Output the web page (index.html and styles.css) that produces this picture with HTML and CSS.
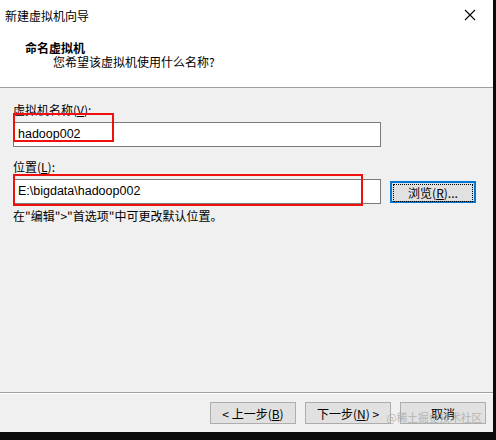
FILE: index.html
```html
<!DOCTYPE html>
<html>
<head>
  <link rel="stylesheet" href="styles.css">
</head>
<body>
  <div class="window">
    <div class="header">
      <div class="titlebar">
        <span class="title">新建虚拟机向导</span>
        <svg class="close" width="12" height="12" viewBox="0 0 12 12">
          <path d="M1 1 L11 11 M11 1 L1 11" stroke="#000" stroke-width="1.1" fill="none"/>
        </svg>
      </div>
      <div class="heading">
        <p class="heading-title">命名虚拟机</p>
        <p class="heading-sub">您希望该虚拟机使用什么名称?</p>
      </div>
    </div>

    <div class="content">
      <label class="label name-label">虚拟机名称(<u>V</u>):</label>
      <div class="field name-row">
        <div class="input">hadoop002</div>
        <div class="mark name-mark"></div>
      </div>

      <label class="label loc-label">位置(<u>L</u>):</label>
      <div class="field loc-row">
        <div class="input">E:\bigdata\hadoop002</div>
        <button class="browse"><span>浏览(<u>R</u>)...</span></button>
        <div class="mark loc-mark"></div>
      </div>
      <p class="hint">在"编辑"&gt;"首选项"中可更改默认位置。</p>
    </div>

    <div class="footer">
      <button class="btn">&lt; 上一步(<u>B</u>)</button>
      <button class="btn">下一步(<u>N</u>) &gt;</button>
      <button class="btn">取消</button>
      <span class="watermark">@稀土掘金技术社区</span>
    </div>
  </div>
</body>
</html>
```

FILE: styles.css
```css
body {
  margin: 0;
  background-color: #0a0a0a;
  font-family: "Noto Sans CJK SC", "Liberation Sans", sans-serif;
  font-size: 12px;
  color: #000;
}

.window {
  width: 493px;
  height: 432px;
  background-color: #f0f0f0;
  display: flex;
  flex-direction: column;
}

.header {
  height: 87px;
  background-color: #fff;
  border-bottom: 1px solid #a0a0a0;
}

.titlebar {
  height: 30px;
  display: flex;
  align-items: center;
  justify-content: space-between;
  padding: 0 17px 0 5px;
}

.heading p {
  margin: 0;
  line-height: 16px;
}

.heading-title {
  font-weight: bold;
  padding: 10px 0 0 25px;
}

.heading-sub {
  padding-left: 53px;
  margin-top: -2px !important;
}

.content {
  flex: 1;
  padding: 6px 0 0 13px;
}

.label {
  display: block;
  line-height: 16px;
}

.name-label {
  margin-top: 8px;
}

.loc-label {
  margin-top: 12px;
}

.field {
  position: relative;
  display: flex;
  align-items: center;
}

.name-row {
  margin-top: 4px;
}

.loc-row {
  margin-top: 4px;
}

.input {
  box-sizing: border-box;
  width: 368px;
  height: 25px;
  background: #fff;
  border: 1px solid #7a7a7a;
  padding-left: 4px;
  line-height: 23px;
  font-family: "Liberation Sans", sans-serif;
  font-size: 12.5px;
}

.mark {
  position: absolute;
  left: 0;
  border: 2px solid #f01010;
  box-sizing: border-box;
}

.name-mark {
  top: -9px;
  width: 101px;
  height: 29px;
}

.loc-mark {
  top: -5px;
  width: 350px;
  height: 32px;
}

.browse {
  margin-left: 9px;
  width: 86px;
  height: 22px;
  padding: 1px;
  border: 2px solid #0078d7;
  background: #e1e1e1;
  font-family: inherit;
  font-size: 12px;
}

.browse span {
  display: block;
  height: 16px;
  line-height: 16px;
  border: 1px dotted #000;
}

.hint {
  margin: 4px 0 0;
  line-height: 16px;
}

.footer {
  position: relative;
  box-sizing: border-box;
  height: 40px;
  border-top: 1px solid #a0a0a0;
  box-shadow: inset 0 1px #fff;
  display: flex;
  justify-content: flex-end;
  align-items: flex-start;
  gap: 9px;
  padding: 9px 7px 0 0;
}

.btn {
  width: 86px;
  height: 22px;
  background: #e1e1e1;
  border: 1px solid #adadad;
  font-family: inherit;
  font-size: 12px;
  padding: 0;
}

.watermark {
  position: absolute;
  right: 11px;
  top: 16px;
  font-size: 11px;
  letter-spacing: -0.3px;
  color: rgba(160, 160, 160, 0.7);
  pointer-events: none;
}
```
